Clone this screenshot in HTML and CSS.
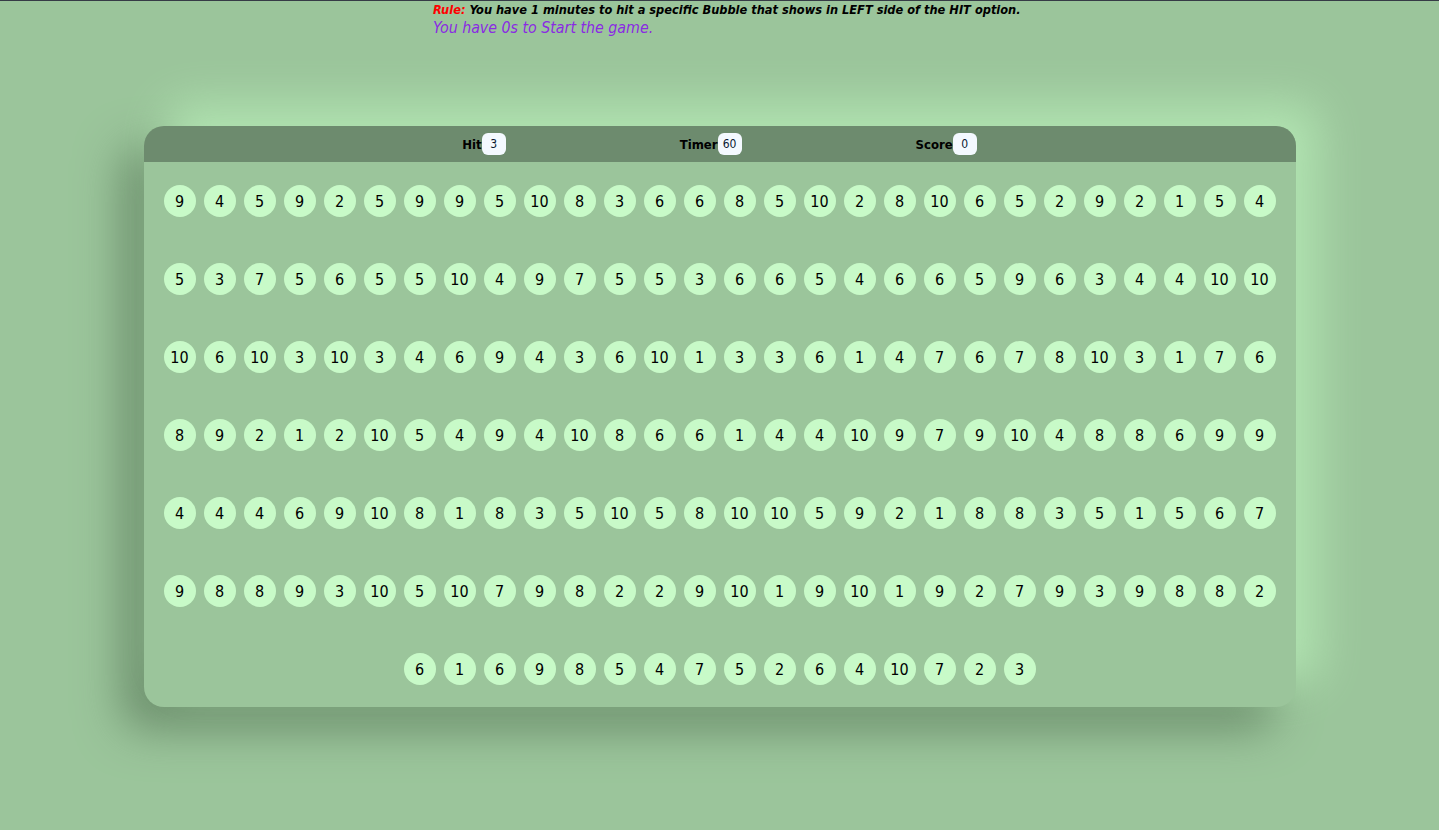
FILE: index.html
```html
<!DOCTYPE html>
<html lang="en">
<head>
<meta charset="utf-8">
<title>Bubble Game</title>
<link rel="stylesheet" href="styles.css">
</head>
<body>
<div class="rules">
  <p class="rule"><span class="rule-label">Rule:</span> You have 1 minutes to hit a specific Bubble that shows in LEFT side of the HIT option.</p>
  <p class="countdown">You have 0s to Start the game.</p>
</div>
<main class="panel">
  <header class="panel-top">
    <div class="stat"><span class="stat-label">Hit</span><span class="stat-box">3</span></div>
    <div class="stat"><span class="stat-label">Timer</span><span class="stat-box">60</span></div>
    <div class="stat"><span class="stat-label">Score</span><span class="stat-box">0</span></div>
  </header>
  <section class="panel-body">
    <div class="bubble">9</div><div class="bubble">4</div><div class="bubble">5</div><div class="bubble">9</div><div class="bubble">2</div><div class="bubble">5</div><div class="bubble">9</div><div class="bubble">9</div><div class="bubble">5</div><div class="bubble">10</div><div class="bubble">8</div><div class="bubble">3</div><div class="bubble">6</div><div class="bubble">6</div><div class="bubble">8</div><div class="bubble">5</div><div class="bubble">10</div><div class="bubble">2</div><div class="bubble">8</div><div class="bubble">10</div><div class="bubble">6</div><div class="bubble">5</div><div class="bubble">2</div><div class="bubble">9</div><div class="bubble">2</div><div class="bubble">1</div><div class="bubble">5</div><div class="bubble">4</div>
    <div class="bubble">5</div><div class="bubble">3</div><div class="bubble">7</div><div class="bubble">5</div><div class="bubble">6</div><div class="bubble">5</div><div class="bubble">5</div><div class="bubble">10</div><div class="bubble">4</div><div class="bubble">9</div><div class="bubble">7</div><div class="bubble">5</div><div class="bubble">5</div><div class="bubble">3</div><div class="bubble">6</div><div class="bubble">6</div><div class="bubble">5</div><div class="bubble">4</div><div class="bubble">6</div><div class="bubble">6</div><div class="bubble">5</div><div class="bubble">9</div><div class="bubble">6</div><div class="bubble">3</div><div class="bubble">4</div><div class="bubble">4</div><div class="bubble">10</div><div class="bubble">10</div>
    <div class="bubble">10</div><div class="bubble">6</div><div class="bubble">10</div><div class="bubble">3</div><div class="bubble">10</div><div class="bubble">3</div><div class="bubble">4</div><div class="bubble">6</div><div class="bubble">9</div><div class="bubble">4</div><div class="bubble">3</div><div class="bubble">6</div><div class="bubble">10</div><div class="bubble">1</div><div class="bubble">3</div><div class="bubble">3</div><div class="bubble">6</div><div class="bubble">1</div><div class="bubble">4</div><div class="bubble">7</div><div class="bubble">6</div><div class="bubble">7</div><div class="bubble">8</div><div class="bubble">10</div><div class="bubble">3</div><div class="bubble">1</div><div class="bubble">7</div><div class="bubble">6</div>
    <div class="bubble">8</div><div class="bubble">9</div><div class="bubble">2</div><div class="bubble">1</div><div class="bubble">2</div><div class="bubble">10</div><div class="bubble">5</div><div class="bubble">4</div><div class="bubble">9</div><div class="bubble">4</div><div class="bubble">10</div><div class="bubble">8</div><div class="bubble">6</div><div class="bubble">6</div><div class="bubble">1</div><div class="bubble">4</div><div class="bubble">4</div><div class="bubble">10</div><div class="bubble">9</div><div class="bubble">7</div><div class="bubble">9</div><div class="bubble">10</div><div class="bubble">4</div><div class="bubble">8</div><div class="bubble">8</div><div class="bubble">6</div><div class="bubble">9</div><div class="bubble">9</div>
    <div class="bubble">4</div><div class="bubble">4</div><div class="bubble">4</div><div class="bubble">6</div><div class="bubble">9</div><div class="bubble">10</div><div class="bubble">8</div><div class="bubble">1</div><div class="bubble">8</div><div class="bubble">3</div><div class="bubble">5</div><div class="bubble">10</div><div class="bubble">5</div><div class="bubble">8</div><div class="bubble">10</div><div class="bubble">10</div><div class="bubble">5</div><div class="bubble">9</div><div class="bubble">2</div><div class="bubble">1</div><div class="bubble">8</div><div class="bubble">8</div><div class="bubble">3</div><div class="bubble">5</div><div class="bubble">1</div><div class="bubble">5</div><div class="bubble">6</div><div class="bubble">7</div>
    <div class="bubble">9</div><div class="bubble">8</div><div class="bubble">8</div><div class="bubble">9</div><div class="bubble">3</div><div class="bubble">10</div><div class="bubble">5</div><div class="bubble">10</div><div class="bubble">7</div><div class="bubble">9</div><div class="bubble">8</div><div class="bubble">2</div><div class="bubble">2</div><div class="bubble">9</div><div class="bubble">10</div><div class="bubble">1</div><div class="bubble">9</div><div class="bubble">10</div><div class="bubble">1</div><div class="bubble">9</div><div class="bubble">2</div><div class="bubble">7</div><div class="bubble">9</div><div class="bubble">3</div><div class="bubble">9</div><div class="bubble">8</div><div class="bubble">8</div><div class="bubble">2</div>
    <div class="bubble">6</div><div class="bubble">1</div><div class="bubble">6</div><div class="bubble">9</div><div class="bubble">8</div><div class="bubble">5</div><div class="bubble">4</div><div class="bubble">7</div><div class="bubble">5</div><div class="bubble">2</div><div class="bubble">6</div><div class="bubble">4</div><div class="bubble">10</div><div class="bubble">7</div><div class="bubble">2</div><div class="bubble">3</div>
  </section>
</main>
</body>
</html>
```

FILE: styles.css
```css
html {
  border-top: 1px solid #363b46;
  background: #9bc59b;
}

body {
  margin: 0;
  min-height: 829px;
  background: #9bc59b;
  font-family: "DejaVu Sans Condensed", "DejaVu Sans", sans-serif;
  color: #000;
}

.rules {
  padding: 1px 0 0 433px;
}

.rule {
  margin: 0;
  font-size: 12.7px;
  line-height: 16px;
  font-weight: bold;
  font-style: italic;
}

.rule-label {
  color: #ff0000;
}

.countdown {
  margin: 0;
  font-size: 15.8px;
  line-height: 20px;
  font-style: italic;
  color: #8a2be2;
}

.panel {
  width: 1152px;
  margin: 88px auto 0;
  border-radius: 20px;
  background: #9bc59b;
  overflow: hidden;
  box-shadow: 22px -22px 45px #b2e5b2, -22px 22px 45px #6c8e6c;
}

.panel-top {
  height: 36px;
  background: #6d8b6e;
  display: flex;
  align-items: center;
  justify-content: center;
  gap: 174px;
}

.stat {
  display: flex;
  align-items: center;
}

.stat-label {
  font-size: 13px;
  font-weight: bold;
}

.stat-box {
  min-width: 24px;
  height: 22px;
  box-sizing: border-box;
  padding: 0 5px;
  border-radius: 6px;
  background: #f4f9ff;
  font-size: 12px;
  line-height: 22px;
  text-align: center;
  color: #0b1a33;
}

.panel-body {
  height: 545px;
  box-sizing: border-box;
  padding: 23px 20px;
  display: flex;
  flex-wrap: wrap;
  justify-content: center;
  align-content: flex-start;
  gap: 46px 8px;
}

.bubble {
  width: 32px;
  height: 32px;
  border-radius: 50%;
  background: #c8fac8;
  display: flex;
  align-items: center;
  justify-content: center;
  font-size: 16px;
  color: #000;
}
```
